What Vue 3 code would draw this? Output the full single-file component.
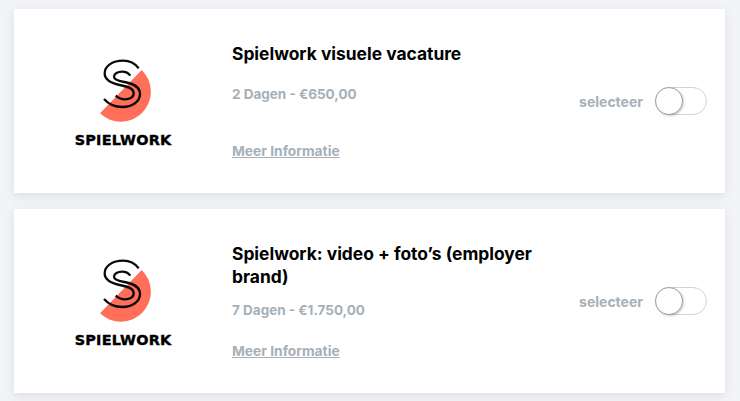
<script setup>
const items = [
  { title: 'Spielwork visuele vacature', price: '2 Dagen - €650,00' },
  { title: 'Spielwork: video + foto’s (employer brand)', price: '7 Dagen - €1.750,00' },
]
</script>

<template>
  <div class="page">
    <div class="card" v-for="item in items" :key="item.title">
      <div class="logo">
        <svg class="mark" viewBox="0 0 192 210" width="64" height="70">
          <path d="M140 45 A88 88 0 0 1 15 175 Z" fill="#ff6f59" />
          <path d="M131 40 C120 25 104 17 84 17 C54 17 29 32 29 55 C29 76 50 85 74 90 C98 95 116 100 116 115 C116 127 104 133 90 133 C80 133 70 129 62 122" fill="none" stroke="#0a0a0a" stroke-width="7" />
          <path d="M106 62 C100 54 92 50 82 50 C68 50 57 56 57 65 C57 74 72 78 88 81 C114 86 135 94 135 117 C135 141 110 156 82 156 C60 156 40 147 27 132" fill="none" stroke="#0a0a0a" stroke-width="7" />
        </svg>
        <div class="wordmark">SPIELWORK</div>
      </div>
      <div class="info">
        <h2 class="title">{{ item.title }}</h2>
        <div class="price">{{ item.price }}</div>
        <a class="more" href="#">Meer Informatie</a>
      </div>
      <div class="select">
        <span class="select-label">selecteer</span>
        <span class="toggle"><span class="knob"></span></span>
      </div>
    </div>
  </div>
</template>

<style scoped>
.page {
  display: flex;
  flex-direction: column;
  gap: 16px;
  padding: 9px 15px 8px 14px;
  font-family: Inter, "Open Sans", sans-serif;
}
.card {
  display: flex;
  height: 184px;
  background: #fff;
  box-shadow: 0 3px 10px rgba(60, 70, 80, 0.12);
}
.logo {
  width: 218px;
  flex: none;
  display: flex;
  flex-direction: column;
  align-items: center;
  padding-top: 46px;
  box-sizing: border-box;
}
.mark {
  display: block;
  margin-left: 8px;
}
.wordmark {
  margin-top: 9px;
  font-family: "DejaVu Sans", sans-serif;
  font-weight: 700;
  font-size: 14.4px;
  letter-spacing: 0.25px;
  line-height: 12px;
  color: #000;
  -webkit-text-stroke: 0.4px #000;
}
.info {
  width: 322px;
  flex: none;
  display: flex;
  flex-direction: column;
  padding: 33px 0 32px;
  box-sizing: border-box;
}
.title {
  margin: 0;
  min-height: 30px;
  font-size: 17.4px;
  line-height: 23px;
  font-weight: 700;
  color: #000;
}
.price {
  margin-top: 12px;
  font-size: 13.5px;
  line-height: 20px;
  font-weight: 700;
  color: #a6b0b9;
}
.more {
  margin-top: auto;
  font-size: 13.8px;
  line-height: 20px;
  font-weight: 700;
  color: #a6b0b9;
  text-decoration: underline;
}
.select {
  margin-left: auto;
  margin-right: 18px;
  display: flex;
  align-items: center;
  gap: 12px;
}
.select-label {
  font-size: 14px;
  font-weight: 700;
  color: #a6b0b9;
}
.toggle {
  width: 52px;
  height: 28px;
  box-sizing: border-box;
  border: 1px solid #d4d4d4;
  border-radius: 14px;
  background: #fff;
  display: block;
  position: relative;
}
.knob {
  position: absolute;
  left: -1px;
  top: -1px;
  width: 28px;
  height: 28px;
  box-sizing: border-box;
  border: 1.5px solid #a0a0a0;
  border-radius: 50%;
  background: #fff;
  box-shadow: 1px 1px 2px rgba(0, 0, 0, 0.2);
}
</style>

<style>
body {
  background: #f3f4f7;
}
</style>
